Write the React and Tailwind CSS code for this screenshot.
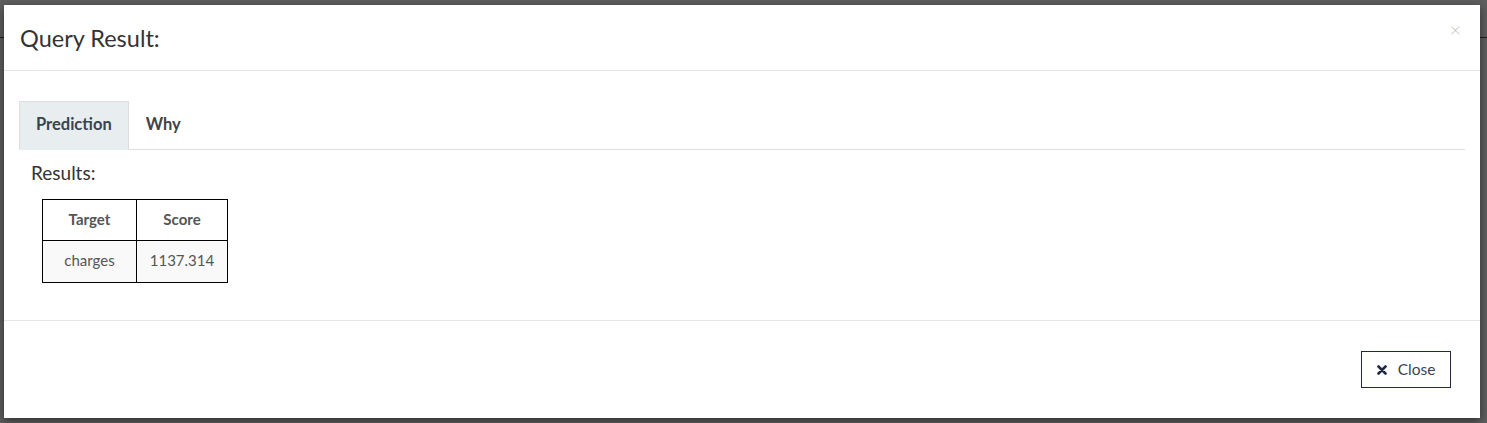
import React, { useState } from "react";

const font = { fontFamily: "Lato, 'Open Sans', Arial, sans-serif" };

const App = () => {
  const [activeTab, setActiveTab] = useState("prediction");

  return (
    <div className="relative h-[423px] w-full overflow-hidden bg-[#5e5e5e]" style={font}>
      {/* page line behind the overlay */}
      <div className="absolute left-0 right-0 top-[37px] h-px bg-[#1e1e1e]" />

      <div className="relative ml-[4px] mr-[7px] mt-[5px] flex h-[413px] flex-col bg-white shadow-[0_3px_9px_rgba(0,0,0,0.5)]">
        {/* header */}
        <div className="flex h-[66px] items-start justify-between border-b border-[#e5e5e5] pl-[16px] pr-[19px]">
          <h4 className="mt-[18px] text-[23.5px] leading-[30px] text-[#333]">Query Result:</h4>
          <button className="mt-[14px] text-[20px] font-light leading-none text-[#c8c8c8]">×</button>
        </div>

        {/* body */}
        <div className="flex-1 px-[15px] pt-[30px]">
          <div className="flex border-b border-[#dddddd]">
            <button
              onClick={() => setActiveTab("prediction")}
              className={`-mb-px h-[49px] border px-[16px] pb-[3px] text-[16.5px] font-bold ${
                activeTab === "prediction"
                  ? "border-[#dddddd] border-b-transparent bg-[#e8eeef] text-[#3a4350]"
                  : "border-transparent text-[#444]"
              }`}
            >
              Prediction
            </button>
            <button
              onClick={() => setActiveTab("why")}
              className={`-mb-px h-[49px] border px-[16px] pb-[3px] text-[16.5px] font-bold ${
                activeTab === "why"
                  ? "border-[#dddddd] border-b-transparent bg-[#e8eeef] text-[#3a4350]"
                  : "border-transparent text-[#444]"
              }`}
            >
              Why
            </button>
          </div>

          <div className="pl-[12px] pt-[11px]">
            <p className="text-[19px] leading-[24px] text-[#333]">Results:</p>
            <table className="ml-[11px] mt-[14px] border-collapse text-[15px] text-[#555]">
              <thead>
                <tr>
                  <th className="h-[41px] w-[94px] border border-black pb-[2px] font-bold">Target</th>
                  <th className="h-[41px] w-[91px] border border-black pb-[2px] font-bold">Score</th>
                </tr>
              </thead>
              <tbody>
                <tr className="bg-[#f9f9f9]">
                  <td className="h-[42px] border border-black pb-[2px] text-center">charges</td>
                  <td className="h-[42px] border border-black pb-[2px] text-center">1137.314</td>
                </tr>
              </tbody>
            </table>
          </div>
        </div>

        {/* footer */}
        <div className="flex h-[98px] items-start justify-end border-t border-[#e5e5e5] pr-[29px] pt-[30px]">
          <button className="flex h-[37px] w-[90px] items-center justify-center gap-[11px] border border-[#1f2a44] text-[15.5px] text-[#3b4256]">
            <svg width="10" height="10" viewBox="0 0 10 10">
              <path d="M1.5 1.5 L8.5 8.5 M8.5 1.5 L1.5 8.5" stroke="#1f2a44" strokeWidth="2.6" strokeLinecap="round" />
            </svg>
            Close
          </button>
        </div>
      </div>
    </div>
  );
};

export default App;
